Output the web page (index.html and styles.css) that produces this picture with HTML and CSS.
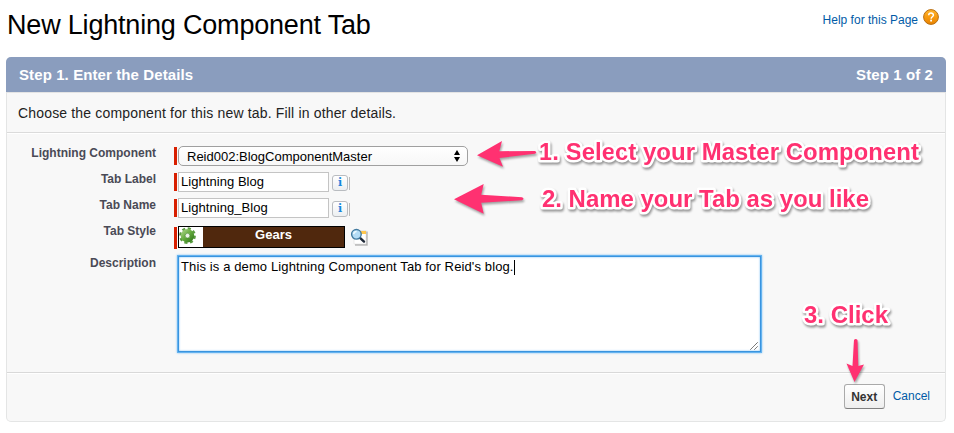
FILE: index.html
```html
<!DOCTYPE html>
<html lang="en">
<head>
<meta charset="utf-8">
<title>New Lightning Component Tab</title>
<link rel="stylesheet" href="styles.css">
</head>
<body>
<header class="page-head">
  <h1>New Lightning Component Tab</h1>
  <a class="help"><span>Help for this Page</span>
    <svg width="16" height="16" viewBox="0 0 16 16"><defs><linearGradient id="hg" x1="0" y1="0" x2="0" y2="1"><stop offset="0" stop-color="#ffb52c"/><stop offset=".5" stop-color="#f79a10"/><stop offset="1" stop-color="#e98300"/></linearGradient></defs><circle cx="8" cy="8" r="7.4" fill="url(#hg)" stroke="#b76e14" stroke-width="1"/><path d="M5.7 6.3C5.7 3.3 10.5 3.4 10.4 6.2C10.3 7.8 8.2 7.7 8.1 9.6" fill="none" stroke="#fff" stroke-width="1.5"/><rect x="7.2" y="10.7" width="1.8" height="1.8" fill="#fff"/></svg>
  </a>
</header>
<main class="card">
  <div class="card-head"><h2>Step 1. Enter the Details</h2><span>Step 1 of 2</span></div>
  <p class="intro"><span>Choose the component for this new tab. Fill in other details.</span></p>
  <section class="form">
    <div class="row"><label>Lightning Component</label><i class="req"></i>
      <div class="select"><span>Reid002:BlogComponentMaster</span><svg width="6" height="12" viewBox="0 0 6 12"><path d="M0 5L3 0L6 5ZM0 7H6L3 12Z" fill="#000"/></svg></div></div>
    <div class="row"><label>Tab Label</label><i class="req"></i><div class="input">Lightning Blog</div><b class="info">i</b></div>
    <div class="row"><label>Tab Name</label><i class="req"></i><div class="input">Lightning_Blog</div><b class="info">i</b></div>
    <div class="row style-row"><label>Tab Style</label><i class="req"></i>
      <div class="swatch">
        <svg width="24" height="20" viewBox="0 0 24 20"><defs><linearGradient id="gg" x1="0" y1="0" x2="1" y2="1"><stop offset="0" stop-color="#9ccb78"/><stop offset=".5" stop-color="#62a93b"/><stop offset="1" stop-color="#3c8223"/></linearGradient></defs><circle cx="8.5" cy="8.7" r="7.2" fill="none" stroke="#5b9c42" stroke-width="2.4" stroke-dasharray="3.1 2.555"/><circle cx="8.5" cy="8.7" r="4.6" fill="none" stroke="url(#gg)" stroke-width="4.4"/><circle cx="8.5" cy="8.7" r="2.4" fill="#eef4e9" stroke="#498b31" stroke-width=".7"/></svg>
        <span>Gears</span>
      </div>
      <svg class="lookup" width="19" height="19" viewBox="0 0 19 19"><path d="M5 3.5H17.7V17.7H5Z" fill="#b5b5b5"/><path d="M4 2.5H16V16H4Z" fill="#fff" stroke="#ddd" stroke-width=".6"/><path d="M10 3H16V6H10Z" fill="#ffc74d"/><path d="M10 9.8L14 13.6" stroke="#1f2938" stroke-width="2.4" stroke-linecap="round"/><circle cx="6.4" cy="6.3" r="4.8" fill="#b4dcf5" stroke="#427a9f" stroke-width="1.4"/><path d="M3.6 6.2Q4 3.7 6.6 3.5" fill="none" stroke="#effaff" stroke-width="1.5"/></svg></div>
    <div class="row desc-row"><label>Description</label>
      <div class="textarea"><span>This is a demo Lightning Component Tab for Reid's blog.</span><i class="caret"></i><svg class="grip" width="8" height="8" viewBox="0 0 8 8"><path d="M.5 7.5L7.5 .5M4.5 7.5L7.5 4.5" stroke="#333" fill="none" stroke-dasharray="1.2 .3"/></svg></div></div>
  </section>
  <footer class="actions"><button>Next</button><a>Cancel</a></footer>
</main>
<svg class="notes" width="954" height="433" viewBox="0 0 954 433">
  <g class="arrows">
    <path d="M477 155.2L502 141L499.3 151.2L535 151Q537.5 152.3 535 153.8L499.5 158L503 166.7Z"/>
    <path d="M454 199.3L483.7 184L481.2 194.7L522 197.2Q525 198.7 522 200.3L481.2 202.8L483.7 213.7Z"/>
    <path d="M854.5 382L846.5 363.5L852.5 366L854 340Q855.7 337.8 857.5 340L858.3 366L864 364.5Z"/>
  </g>
  <g class="note-text">
    <text x="539" y="160" textLength="380">1. Select your Master Component</text>
    <text x="542" y="207" textLength="327">2. Name your Tab as you like</text>
    <text x="804" y="322.5" textLength="84">3. Click</text>
  </g>
</svg>
</body>
</html>
```

FILE: styles.css
```css
* { box-sizing: border-box; }
body { margin: 0; width: 954px; height: 433px; overflow: hidden; background: #fff; color: #000; font-family: "Liberation Sans", Arial, sans-serif; }
h1, h2, p { margin: 0; }
.page-head { height: 57px; padding: 9px 15px 0 7px; display: flex; justify-content: space-between; align-items: flex-start; }
h1 { font-size: 27px; line-height: 32px; font-weight: 400; letter-spacing: -.19px; white-space: nowrap; }
.help { display: flex; align-items: flex-start; gap: 5px; color: #015ba7; font-size: 12px; line-height: 22px; }
.help svg { display: block; }
.card { width: 940px; height: 365px; margin-left: 6px; background: #f8f8f8; border: 1px solid #e4e5e5; border-top: 0; border-radius: 5px; display: flex; flex-direction: column; }
.card-head { height: 35px; margin: 0 -1px; padding: 0 13px; display: flex; justify-content: space-between; align-items: center; background: #8a9dbe; color: #fff; border-radius: 5px 5px 0 0; font-size: 15px; font-weight: 700; letter-spacing: .1px; }
h2 { font-size: inherit; }
.intro { height: 41px; padding-left: 11px; line-height: 41px; font-size: 14px; letter-spacing: .165px; color: #222; border-top: 1px solid #e4e4e4; border-bottom: 1px solid #dbdbdb; box-shadow: 0 1px #fff; }
.form { height: 240px; padding-top: 13px; border-bottom: 1px solid #d9d9d9; box-shadow: 0 1px #fff; }
.row { display: flex; align-items: flex-start; height: 26px; }
label { width: 149px; text-align: right; font-size: 12px; font-weight: 700; line-height: 14px; color: #4a4a56; white-space: nowrap; }
.req { width: 3px; height: 18px; margin: 1px 1px 0 18px; background: #d81f00; }
.select { width: 290px; height: 20px; padding: 0 7px 0 8px; border: 1px solid #a0a0a0; border-radius: 5px; background: linear-gradient(#fff, #f7f7f7); display: flex; justify-content: space-between; align-items: center; font-size: 13px; }
.input { width: 151px; height: 20px; padding-left: 2px; border: 1px solid #c4c4c4; background: #fff; font-size: 13px; line-height: 18px; letter-spacing: .05px; }
.info { position: relative; width: 16px; height: 16px; margin: 3px 0 0 3px; border: 1px solid #b9bcc0; border-radius: 3px; background: linear-gradient(#fff, #eceff1); color: #1686dc; font: 700 11px/14px "DejaVu Serif", serif; text-align: center; }
.info::after { content: ""; position: absolute; left: 16px; top: 1px; width: 1px; height: 13px; background: #bbb; }
.style-row { height: 30px; }
.style-row .req { height: 22px; margin-top: 3px; }
.swatch { width: 167px; height: 22px; margin-top: 2px; border: 1px solid #000; background: #50280d; display: flex; }
.swatch svg { background: #fff; }
.swatch span { flex: 1; text-align: center; color: #fff; font-size: 13px; line-height: 16px; font-weight: 700; }
.lookup { margin: 4px 0 0 5px; }
.desc-row { height: 100px; padding-top: 2px; }
.textarea { position: relative; width: 583px; height: 96px; margin-left: 22px; padding: 3px 0 0 2px; border: 1px solid #3994df; background: #fff; box-shadow: 0 0 0 1px #65b3ef, 0 0 2px 1px #7fc2f6, inset 0 0 2px #69b5f2; display: flex; font-size: 13px; line-height: 14px; letter-spacing: .12px; white-space: nowrap; }
.caret { width: 1px; height: 15px; background: #000; }
.grip { position: absolute; right: 2px; bottom: 1px; }
.actions { height: 48px; padding: 11px 15px 0 0; display: flex; justify-content: flex-end; align-items: flex-start; }
button { width: 41px; height: 25px; margin-right: 8px; padding: 0; border: 1px solid #aaa; border-bottom-color: #7f7f7f; border-radius: 3px; background: linear-gradient(#fff, #eee); color: #333; font: 700 12px "Liberation Sans", sans-serif; }
.actions a { color: #015ba7; font-size: 12px; line-height: 24px; }
.notes { position: absolute; left: 0; top: 0; pointer-events: none; }
.arrows { fill: #ff3171; filter: drop-shadow(1px 2px 1px rgba(0,0,0,.35)); }
.note-text { font: 700 24px "Liberation Sans", sans-serif; fill: #ff3171; stroke: #fff; stroke-width: 5px; stroke-linejoin: round; paint-order: stroke fill; filter: drop-shadow(1px 2px 1px rgba(0,0,0,.4)); }
```
